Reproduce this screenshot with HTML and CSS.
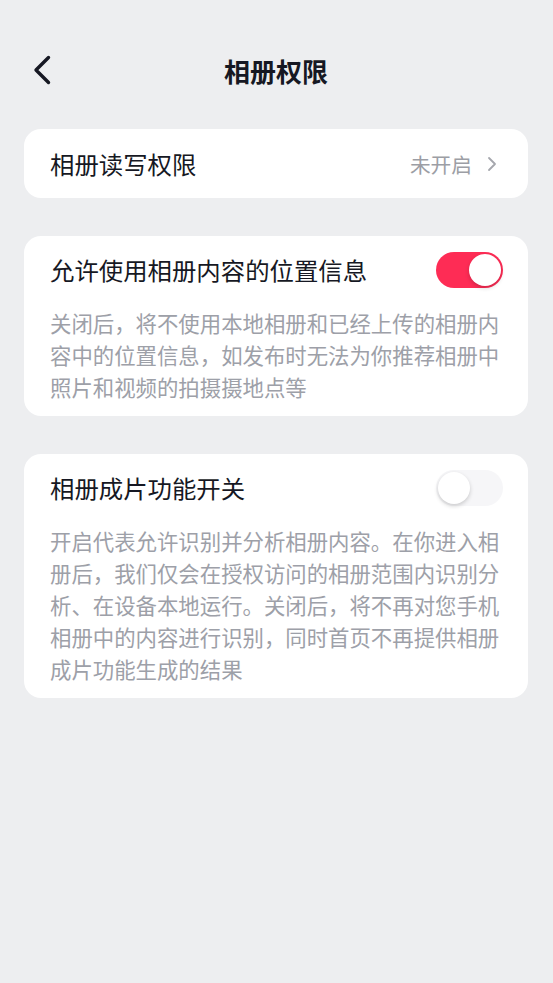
FILE: index.html
```html
<!DOCTYPE html>
<html lang="zh-CN">
<head>
<meta charset="utf-8">
<link rel="stylesheet" href="styles.css">
</head>
<body>
<div class="page">
  <header class="nav">
    <svg class="back" width="20" height="30" viewBox="0 0 20 30"><path d="M15.5 2.5 L3 15 L15.5 27.5" fill="none" stroke="#161823" stroke-width="3.4" stroke-linecap="round" stroke-linejoin="round"/></svg>
    <h1 class="nav-title">相册权限</h1>
  </header>

  <section class="card card-link">
    <span class="row-title">相册读写权限</span>
    <span class="row-value">未开启
      <svg class="chev" width="12" height="16" viewBox="0 0 12 16"><path d="M3 2 L9 8 L3 14" fill="none" stroke="#a5a7ad" stroke-width="1.8" stroke-linecap="round" stroke-linejoin="round"/></svg>
    </span>
  </section>

  <section class="card">
    <div class="row">
      <span class="row-title">允许使用相册内容的位置信息</span>
      <span class="switch on"><span class="knob"></span></span>
    </div>
    <p class="desc">关闭后，将不使用本地相册和已经上传的相册内容中的位置信息，如发布时无法为你推荐相册中照片和视频的拍摄摄地点等</p>
  </section>

  <section class="card">
    <div class="row">
      <span class="row-title">相册成片功能开关</span>
      <span class="switch off"><span class="knob"></span></span>
    </div>
    <p class="desc">开启代表允许识别并分析相册内容。在你进入相册后，我们仅会在授权访问的相册范围内识别分析、在设备本地运行。关闭后，将不再对您手机相册中的内容进行识别，同时首页不再提供相册成片功能生成的结果</p>
  </section>
</div>
</body>
</html>
```

FILE: styles.css
```css
* { box-sizing: border-box; }
html, body {
  margin: 0;
  padding: 0;
  background: #edeef0;
}
body {
  font-family: "Noto Sans CJK SC", "Noto Sans", sans-serif;
  color: #161823;
  width: 553px;
  height: 983px;
  overflow: hidden;
}
.page {
  padding: 0 25px 0 24px;
}
.nav {
  position: relative;
  height: 129px;
  padding-top: 48px;
  display: flex;
  justify-content: center;
}
.nav-title {
  margin: 0;
  font-size: 26px;
  font-weight: 700;
  line-height: 46px;
  height: 46px;
}
.back {
  position: absolute;
  left: 9px;
  top: 55px;
}
.card {
  background: #ffffff;
  border-radius: 17px;
  margin-bottom: 38px;
  padding: 16px 25px 13px 26px;
}
.card-link {
  height: 69px;
  padding: 0 30px 0 26px;
  display: flex;
  align-items: center;
  justify-content: space-between;
}
.row {
  display: flex;
  align-items: center;
  justify-content: space-between;
  height: 36px;
}
.row-title {
  font-size: 24.4px;
  line-height: 34px;
  color: #161823;
}
.row-value {
  display: flex;
  align-items: center;
  gap: 14px;
  font-size: 20.7px;
  color: #9c9ea5;
}
.desc {
  margin: 19px 0 0;
  font-size: 21.4px;
  line-height: 32px;
  color: #9da0a8;
}
.switch {
  position: relative;
  width: 67px;
  height: 36px;
  border-radius: 18px;
  flex: none;
}
.switch.on { background: #fe2c55; }
.switch.off { background: #f6f6f8; }
.knob {
  position: absolute;
  top: 2px;
  width: 32px;
  height: 32px;
  border-radius: 50%;
  background: #ffffff;
  box-shadow: 0 2px 4px rgba(0,0,0,0.18);
}
.switch.on .knob { right: 2px; }
.switch.off .knob { left: 2px; }
```
